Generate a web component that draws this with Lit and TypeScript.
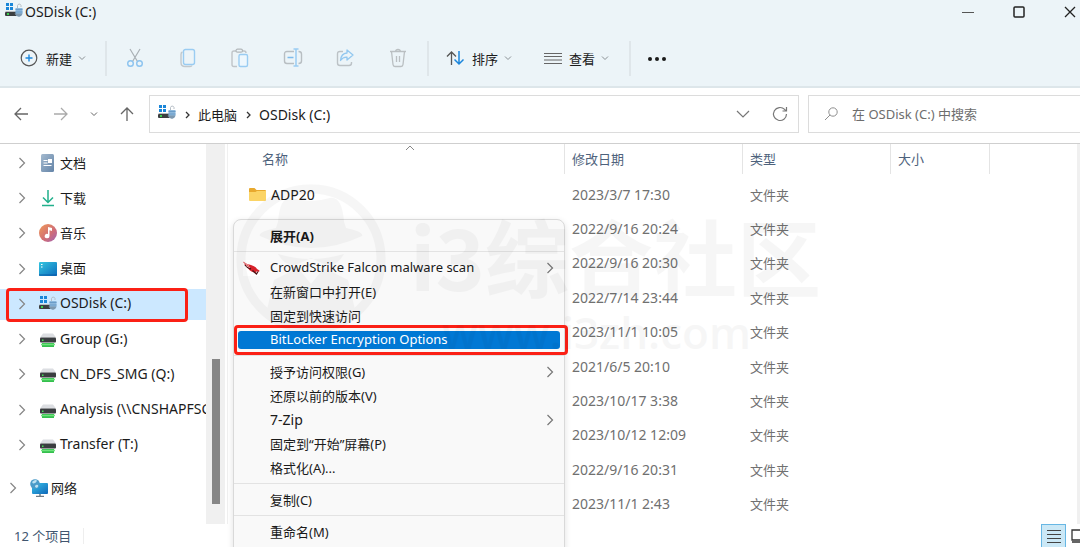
import { LitElement, html, css, svg, nothing } from "lit";
import { customElement, property } from "lit/decorators.js";
import { classMap } from "lit/directives/class-map.js";

const driveIcon = html`<svg class="ico" width="18" height="16" viewBox="0 0 18 16" aria-hidden="true">
  <path d="M1 0h3v3H1zM5 0h3v3H5zM1 4h3v3H1zM5 4h3v3H5z" fill="#1a86d8" />
  <path d="M1 8h10v1H0z" fill="#b9bdc0" />
  <rect x="0" y="9" width="12" height="4" rx="1" fill="#3c3f41" />
  <rect x="2" y="10" width="2" height="2" fill="#3ccf4e" />
  <path d="M12.500 5V2.500a1.800 1.800 0 0 1 3.500 0V4" fill="none" stroke="#b4bdc5" />
  <path d="M10.500 5h7v5q0 2.500-3.500 3.500q-3.500-1-3.500-3.500z" fill="#8db8dc" />
  <path d="M10.500 6.500h7M10.500 9h7" stroke="#6a9cc8" />
  <path d="M9.500 10.500h8q-1 3-3.500 3.300q-3-.3-4.500-3.300z" fill="#7e98ae" />
</svg>`;

const netDriveIcon = html`<svg class="ico" width="18" height="18" viewBox="0 -2 18 18" aria-hidden="true">
  <path d="M4 1.500h10l3 4H1z" fill="#dcdee2" />
  <rect x="1" y="5.500" width="16" height="5" rx="1" fill="#3a3d40" />
  <rect x="3" y="7.500" width="1.500" height="1.500" fill="#43dd55" />
  <path d="M3 11h12v4H3z" fill="#35c04d" />
  <path d="M2 12.500h14" stroke="#6fe37c" stroke-width="1.500" />
</svg>`;

const docIcon = html`<svg class="ico" width="18" height="18" viewBox="0 0 18 18" aria-hidden="true">
  <defs><linearGradient id="g" x2="1" y2="1"><stop stop-color="#a4bacf" /><stop offset="1" stop-color="#6484a8" /></linearGradient></defs>
  <rect x="2" y="0" width="13" height="18" rx="1.500" fill="url(#g)" />
  <path d="M4.500 6.500h4M4.500 9h4M4.500 11.500h8" stroke="#fff" />
  <rect x="9" y="5" width="4" height="4" fill="#fff" />
</svg>`;

const downloadIcon = html`<svg class="ico" width="18" height="18" viewBox="0 0 18 18" aria-hidden="true">
  <path d="M9 1v12M4 8.500l5 5 5-5M3 16.500h12" fill="none" stroke="#22b08c" stroke-width="1.500" />
</svg>`;

const musicIcon = html`<svg class="ico" width="18" height="18" viewBox="0 0 18 18" aria-hidden="true">
  <defs><linearGradient id="g" x2="1" y2="1"><stop stop-color="#f09a57" /><stop offset=".6" stop-color="#cf6c78" /><stop offset="1" stop-color="#9d64b8" /></linearGradient></defs>
  <circle cx="9" cy="9" r="9" fill="url(#g)" />
  <path d="M9 3l4 1v3l-2.500-.7V12a2.400 2.200 0 1 1-1.500-2z" fill="#fff" />
</svg>`;

const desktopIcon = html`<svg class="ico" width="18" height="16" viewBox="0 0 18 16" aria-hidden="true">
  <defs><linearGradient id="g" x2="1" y2="1"><stop stop-color="#35c6e0" /><stop offset="1" stop-color="#0b6cbd" /></linearGradient></defs>
  <rect x="0" y="1" width="18" height="14" rx="1" fill="url(#g)" />
  <path d="M2 3.500h1.500M2 6h1.500" stroke="#fff" />
  <path d="M0 14h18" stroke="#0a5aa5" />
</svg>`;

const networkIcon = html`<svg class="ico" width="18" height="18" viewBox="0 0 18 18" aria-hidden="true">
  <defs><linearGradient id="g" x2="1" y2="1"><stop stop-color="#39c2ea" /><stop offset="1" stop-color="#0f67b8" /></linearGradient></defs>
  <rect x="2" y="4" width="16" height="11" rx="1" fill="url(#g)" />
  <path d="M10 15v2M6 17.500h8" stroke="#6f7b85" stroke-width="1.500" />
  <circle cx="5" cy="5" r="4.800" fill="#4c9cc9" />
  <path d="M2 3q3-3 5-1.500q-1 3-4 3zM5 8q0-3 3-2q1 1-1 3z" fill="#bfe3f2" />
</svg>`;

const folderIcon = html`<svg class="ico" width="17" height="15" viewBox="0 0 17 15" aria-hidden="true">
  <path d="M0 2q0-1 1-1h4.500l2 2H16q1 0 1 1v8H0z" fill="#e8a92e" />
  <path d="M0 5h6.500l1.500-1H17v9q0 1-1 1H1q-1 0-1-1z" fill="#fbd466" />
</svg>`;

const falconIcon = html`<svg class="ico" width="17" height="16" viewBox="0 0 17 16" aria-hidden="true">
  <rect width="17" height="16" fill="#fff" />
  <path d="M0 1.500q3 2.500 8 3.500q5 1.500 6 4l2.500 1.500-.5 1.500-2-1-1.500 2-4-1.500q-3-2-4-4q-3-2-4.500-6z" fill="#d8232c" />
  <path d="M2 5q2 3 6 4M9.500 10.500l4 3.500 1.500-2.500" stroke="#4d1518" fill="none" stroke-width="1.300" />
  <path d="M1 3q3 2 5 2.500M3 5.500q2 1.500 4 2" stroke="#fbdcdc" stroke-width=".7" fill="none" />
</svg>`;

const line = (w: number, h: number, body: unknown) =>
  html`<svg width=${w} height=${h} viewBox="0 0 ${w} ${h}" fill="none" stroke="currentColor" aria-hidden="true">${body}</svg>`;

const chevronDown = line(8, 8, svg`<path d="M1 2.500l3 3 3-3" />`);
const chevronRight = line(8, 12, svg`<path d="M1.500 1l5 5-5 5" stroke-width="1.200" />`);

const tools = [
  { label: "剪切", icon: line(20, 20, svg`<path d="M5 1l7.500 12.500M15 1L7.500 13.500" stroke="#a9b0b5" stroke-width="1.200" /><circle cx="5.500" cy="15.500" r="2.800" stroke="#8cc3ef" stroke-width="1.400" /><circle cx="14.500" cy="15.500" r="2.800" stroke="#8cc3ef" stroke-width="1.400" />`) },
  { label: "复制", icon: line(20, 20, svg`<path d="M4.500 4q-1.500.5-1.500 2.500v8q0 4 4 4h5q1.500 0 2-1" stroke="#c2c8cc" stroke-width="1.400" /><rect x="5.500" y="1.500" width="11" height="15" rx="2" stroke="#9accf2" stroke-width="1.400" />`) },
  { label: "粘贴", icon: line(20, 20, svg`<path d="M7 18.500H4q-2 0-2-2V5q0-2 2-2h2M12 3h2q2 0 2 2" stroke="#bfc4c8" stroke-width="1.400" /><rect x="6" y="1.200" width="6.500" height="3" rx="1.500" stroke="#b2b7ba" stroke-width="1.200" /><rect x="9" y="6.500" width="8.500" height="12" rx="1.500" fill="#eef7fd" stroke="#9accf2" stroke-width="1.400" />`) },
  { label: "重命名", icon: line(20, 20, svg`<path d="M11 3.500H4q-2.500 0-2.500 2.500v7q0 2.500 2.500 2.500h7M15.500 3.500q3 0 3 2.500v7q0 2.500-3 2.500" stroke="#b8bec2" stroke-width="1.400" /><path d="M13 1v17M10.500 1h5M10.500 18h5" stroke="#9accf2" stroke-width="1.500" /><path d="M4.500 9.500h6" stroke="#7ebbeb" stroke-width="1.500" />`) },
  { label: "共享", icon: line(20, 20, svg`<path d="M8 3.500H5Q2.500 3.500 2.500 6v9q0 2.500 2.500 2.500h9q2.500 0 2.500-2.500v-1" stroke="#bcc2c6" stroke-width="1.400" /><path d="M12 2l6 5-6 5V9.200q-4-.3-6.500 3.300Q6 5.500 12 5z" stroke="#93c8f0" stroke-width="1.300" stroke-linejoin="round" />`) },
  { label: "删除", icon: line(20, 20, svg`<path d="M2 3.500h16M3.500 3.500l1.500 13q.2 2 2 2h6q1.800 0 2-2l1.500-13M7.500 3.500q.3-2 2.500-2t2.500 2M8.500 8v6M11.500 8v6" stroke="#babfc2" stroke-width="1.300" />`) },
];

interface Node { label: string; icon: unknown; cjk?: boolean; active?: boolean }
const tree: Node[] = [
  { label: "文档", icon: docIcon, cjk: true },
  { label: "下载", icon: downloadIcon, cjk: true },
  { label: "音乐", icon: musicIcon, cjk: true },
  { label: "桌面", icon: desktopIcon, cjk: true },
  { label: "OSDisk (C:)", icon: driveIcon, active: true },
  { label: "Group (G:)", icon: netDriveIcon },
  { label: "CN_DFS_SMG (Q:)", icon: netDriveIcon },
  { label: "Analysis (\\\\CNSHAPFSC", icon: netDriveIcon },
  { label: "Transfer (T:)", icon: netDriveIcon },
];

@customElement("tree-item")
class TreeItem extends LitElement {
  @property({ attribute: false }) node!: Node;
  static styles = css`
    :host { display: block; min-width: 0; }
    .row { box-sizing: border-box; display: flex; align-items: center; width: 100%; height: 31px; margin: 2px 0; padding: 0 0 1px 18px; border: 0; background: none; font: 14px "Noto Sans", "Noto Sans CJK SC", sans-serif; color: #1b1b1b; white-space: nowrap; overflow: hidden; text-align: left; }
    .active { background: #cce8ff; }
    .cjk { font-size: 13px; }
    .arrow { display: flex; width: 21px; color: #858585; flex: none; }
    .ico { flex: none; margin-right: 3px; }
    .label { padding-bottom: 2px; }
    :host([root]) .row { padding-left: 9px; }
  `;
  render() {
    const n = this.node;
    return html`<button class=${classMap({ row: true, cjk: !!n.cjk, active: !!n.active })}>
      <span class="arrow">${chevronRight}</span>${n.icon}<span class="label">${n.label}</span>
    </button>`;
  }
}

interface Entry { label?: string; bold?: boolean; sub?: boolean; icon?: unknown; selected?: boolean; large?: boolean }
const menu: Entry[] = [
  { label: "展开(A)", bold: true },
  {},
  { label: "CrowdStrike Falcon malware scan", icon: falconIcon, sub: true },
  { label: "在新窗口中打开(E)" },
  { label: "固定到快速访问" },
  { label: "BitLocker Encryption Options", selected: true },
  {},
  { label: "授予访问权限(G)", sub: true },
  { label: "还原以前的版本(V)" },
  { label: "7-Zip", sub: true, large: true },
  { label: "固定到“开始”屏幕(P)" },
  { label: "格式化(A)..." },
  {},
  { label: "复制(C)" },
  {},
  { label: "重命名(M)" },
];

@customElement("context-menu")
class ContextMenu extends LitElement {
  static styles = css`
    :host { display: flex; flex-direction: column; box-sizing: border-box; padding: 4px 4px 16px; border: 1px solid #d9d9d9; border-radius: 8px; background: #f9f9f9; box-shadow: 0 2px 6px rgba(0, 0, 0, 0.12); }
    .item { position: relative; box-sizing: border-box; display: flex; align-items: center; width: 100%; height: 24px; padding: 0 6px 0 5px; border: 0; background: none; font: 13px "Noto Sans", "Noto Sans CJK SC", sans-serif; color: #1a1a1a; text-align: left; white-space: nowrap; }
    .large { font-size: 14px; }
    .bold { font-weight: 700; }
    .slot { display: flex; flex: none; width: 27px; }
    .label { flex: 1; padding-bottom: 2px; }
    .arrow { display: flex; color: #777; }
    .selected { height: 18px; margin: 3px 0; border-radius: 3px; background: #0078d4; color: #fff; }
    .mark { position: absolute; inset: -6px -8px -6px -4px; border: 3px solid #fb2015; border-radius: 4px; }
    .sep { height: 1px; margin: 3px -4px 4px; border: 0; background: #e3e3e3; }
  `;
  render() {
    return menu.map((m) => m.label
      ? html`<button class=${classMap({ item: true, bold: !!m.bold, large: !!m.large, selected: !!m.selected })}>
          <span class="slot">${m.icon ?? nothing}</span><span class="label">${m.label}</span>
          ${m.sub ? html`<span class="arrow">${chevronRight}</span>` : nothing}
          ${m.selected ? html`<span class="mark"></span>` : nothing}
        </button>`
      : html`<hr class="sep" />`);
  }
}

const dates = ["2023/3/7 17:30", "2022/9/16 20:24", "2022/9/16 20:30", "2022/7/14 23:44", "2023/11/1 10:05", "2021/6/5 20:10", "2023/10/17 3:38", "2023/10/12 12:09", "2022/9/16 20:31", "2023/11/1 2:43"];

@customElement("app-root")
class AppRoot extends LitElement {
  static styles = css`
    :host { position: relative; display: flex; flex-direction: column; height: 100vh; overflow: hidden; background: #fff; color: #1b1b1b; font: 13px "Noto Sans", "Noto Sans CJK SC", sans-serif; }
    button { display: flex; align-items: center; justify-content: center; padding: 0; border: 0; background: none; font: inherit; color: inherit; }
    svg { display: block; flex: none; }
    .latin { font-size: 14px; }
    .title { display: flex; align-items: center; height: 24px; padding-left: 5px; background: #ecf4f8; }
    .title .name { flex: 1; margin-left: 2px; padding-bottom: 2px; }
    .title > .ico { margin-bottom: 2px; }
    .window { display: flex; gap: 31px; }
    .window button { width: 20px; height: 24px; }
    .tools { display: flex; align-items: center; height: 62px; background: #ecf4f8; border-bottom: 2px solid #dde6ea; }
    .group { box-sizing: border-box; display: flex; align-items: center; height: 35px; margin-top: 6px; border-right: 2px solid #dfe6ea; }
    .group .tail { color: #8a9094; margin-left: 6px; }
    .new { width: 107px; padding-left: 20px; }
    .new svg + span { margin-left: 8px; }
    .edit { display: grid; grid-template-columns: repeat(6, 1fr); width: 322px; padding: 0 3px 0 2px; }
    .show { width: 202px; padding-left: 17px; gap: 31px; }
    .show svg + span { margin-left: 7px; }
    .more { width: 52px; height: 35px; margin-top: 6px; }
    .nav { box-sizing: border-box; display: flex; align-items: center; height: 56px; padding-bottom: 3px; border-bottom: 1px solid #cfcfcf; }
    .arrows { display: grid; grid-template-columns: 42px 38px 28px 38px; width: 149px; color: #666; }
    .arrows .off { color: #aaa; }
    .address { flex: 1; box-sizing: border-box; display: flex; align-items: center; height: 38px; padding: 0 10px 0 8px; border: 1px solid #dcdcdc; }
    .crumbs { flex: 1; display: flex; align-items: center; }
    .crumbs > svg:not(.ico) { margin: 2px 7px 0 9px; color: #333; }
    .crumbs > .ico { margin-bottom: 2px; }
    .crumbs a { color: inherit; text-decoration: none; }
    .address > button { margin-left: 22px; color: #777; }
    .search { box-sizing: border-box; display: flex; align-items: center; width: 272px; height: 38px; margin-left: 9px; padding-left: 15px; border: 1px solid #dcdcdc; border-right: 0; color: #8f8f8f; }
    .search input { flex: 1; min-width: 0; margin-left: 14px; padding: 0; border: 0; outline: 0; background: none; font: inherit; }
    .search input::placeholder { color: #6d6d6d; opacity: 1; }
    .body { flex: 1; min-height: 0; display: grid; grid-template-columns: 206px 19px 1fr 3px; }
    .tree { display: flex; flex-direction: column; min-width: 0; padding-top: 2px; overflow: hidden; }
    .places { display: grid; grid-auto-rows: 1fr; height: 317px; }
    .network { margin-top: 8px; }
    .rail { background: #f0f0f0; }
    .thumb { width: 8px; height: 145px; margin: 215px auto 0 6px; background: #868686; }
    .files { margin-left: 2px; border-left: 1px solid #f0f0f0; overflow: hidden; }
    table { table-layout: fixed; width: 762px; height: 378px; border-collapse: collapse; }
    th, td { height: 34px; padding: 0 0 2px 7px; text-align: left; font-weight: 400; white-space: nowrap; box-sizing: border-box; }
    th { position: relative; padding-bottom: 6px; color: #4e627c; background: linear-gradient(#e4e4e4, #e4e4e4) right top / 1px 30px no-repeat; }
    th:first-child { padding-left: 34px; }
    .caret { position: absolute; left: 177px; top: 0; color: #888; }
    td { color: #707070; }
    td:first-child { padding-left: 21px; color: #1b1b1b; }
    .file { display: flex; align-items: center; gap: 5px; }
    .status { display: flex; align-items: center; height: 23px; padding-left: 14px; color: #41566f; }
    .count { padding-right: 12px; border-right: 1px solid #eee; line-height: 16px; margin-right: auto; }
    .status button { height: 23px; }
    .list { width: 25px; border: 1px solid #67b7e4; border-bottom: 0; background: #cbe8f6; color: #444; }
    .tiles { width: 14px; padding-left: 5px; color: #333; overflow: hidden; justify-content: flex-start; }
    context-menu { position: absolute; left: 233px; top: 219px; width: 332px; }
    .mark { position: absolute; left: 6px; top: 288px; width: 182px; height: 34px; box-sizing: border-box; border: 3px solid #fb2015; border-radius: 4px; pointer-events: none; }
    .watermark { position: absolute; left: 236px; top: 184px; display: flex; color: #000; opacity: 0.03; pointer-events: none; }
    .brand { margin-left: 24px; padding-top: 16px; white-space: nowrap; }
    .big { font: 700 84px/110px "Noto Sans CJK SC", sans-serif; }
    .site { margin: -8px 0 0 32px; font: 600 44px/60px "Open Sans", sans-serif; }
  `;

  render() {
    return html`
      <header class="title">
        ${driveIcon}<span class="name latin">OSDisk (C:)</span>
        <div class="window">
          <button aria-label="最小化">${line(12, 12, svg`<path d="M0 6.500h12" stroke="#555" />`)}</button>
          <button aria-label="最大化">${line(12, 12, svg`<rect x="1" y="1" width="10" height="10" rx="1" stroke="#222" stroke-width="1.500" />`)}</button>
          <button aria-label="关闭">${line(12, 12, svg`<path d="M1 1l10 10M11 1L1 11" stroke="#222" stroke-width="1.300" />`)}</button>
        </div>
      </header>
      <div class="tools">
        <div class="group new">
          <button>${line(18, 18, svg`<circle cx="9" cy="9" r="7.800" stroke="#555" stroke-width="1.200" /><path d="M9 5.500v7M5.500 9h7" stroke="#1b86dc" stroke-width="1.400" />`)}<span>新建</span><span class="tail">${chevronDown}</span></button>
        </div>
        <div class="group edit">${tools.map((t) => html`<button aria-label=${t.label}>${t.icon}</button>`)}</div>
        <div class="group show">
          <button>${line(19, 18, svg`<path d="M5.500 16V3M1 7.500L5.500 3l4.500 4.500" stroke="#555" stroke-width="1.300" /><path d="M13 2v13M8.500 10.500L13 15l4.500-4.500" stroke="#1b86dc" stroke-width="1.500" />`)}<span>排序</span><span class="tail">${chevronDown}</span></button>
          <button>${line(19, 18, svg`<path d="M1 4.500h18M1 7.500h18M1 11h18M1 14.500h18" stroke="#666" />`)}<span>查看</span><span class="tail">${chevronDown}</span></button>
        </div>
        <button class="more" aria-label="更多">${line(20, 6, svg`<g fill="#1a1a1a" stroke="none"><circle cx="3" cy="4" r="2" /><circle cx="10" cy="4" r="2" /><circle cx="17" cy="4" r="2" /></g>`)}</button>
      </div>
      <nav class="nav">
        <div class="arrows">
          <button aria-label="后退">${line(16, 16, svg`<path d="M15 8H2M8 2L2 8l6 6" stroke-width="1.300" />`)}</button>
          <button class="off" aria-label="前进">${line(16, 16, svg`<path d="M1 8h13M8 2l6 6-6 6" stroke-width="1.300" />`)}</button>
          <button aria-label="最近">${chevronDown}</button>
          <button aria-label="向上">${line(16, 16, svg`<path d="M8 15V2M2 8l6-6 6 6" stroke-width="1.300" />`)}</button>
        </div>
        <div class="address">
          <div class="crumbs">
            ${driveIcon}${line(6, 8, svg`<path d="M1 1l3 3-3 3" stroke-width="1.300" />`)}<a href="#pc">此电脑</a>${line(6, 8, svg`<path d="M1 1l3 3-3 3" stroke-width="1.300" />`)}<a class="latin" href="#c">OSDisk (C:)</a>
          </div>
          <button aria-label="展开地址">${line(14, 14, svg`<path d="M1 4l6 6 6-6" stroke-width="1.200" />`)}</button>
          <button aria-label="刷新">${line(16, 16, svg`<path d="M14.500 8A6.500 6.500 0 1 1 12.600 3.400L14 4.800M14.500 1v4h-4" stroke-width="1.200" />`)}</button>
        </div>
        <label class="search">
          ${line(14, 14, svg`<circle cx="9" cy="5" r="4.200" /><path d="M6 8L1 13" />`)}
          <input type="search" aria-label="搜索" placeholder="在 OSDisk (C:) 中搜索" />
        </label>
      </nav>
      <div class="body">
        <aside class="tree">
          <div class="places">${tree.map((n) => html`<tree-item .node=${n}></tree-item>`)}</div>
          <tree-item root class="network" .node=${{ label: "网络", icon: networkIcon, cjk: true }}></tree-item>
        </aside>
        <div class="rail"><div class="thumb"></div></div>
        <main class="files">
          <table>
            <colgroup><col width="337" /><col width="178" /><col width="148" /><col width="99" /></colgroup>
            <thead><tr>
              <th>名称<i class="caret">${line(10, 8, svg`<path d="M1 6l4-4 4 4" />`)}</i></th>
              <th>修改日期</th><th>类型</th><th>大小</th>
            </tr></thead>
            <tbody>${dates.map((d, i) => html`<tr>
              <td>${i === 0 ? html`<div class="file latin">${folderIcon}ADP20</div>` : nothing}</td>
              <td class="latin">${d}</td><td>文件夹</td><td></td>
            </tr>`)}</tbody>
          </table>
        </main>
        <div class="rail"></div>
      </div>
      <footer class="status">
        <span class="count">12 个项目</span>
        <button class="list" aria-label="详细信息">${line(14, 14, svg`<path d="M0 1.500h14M0 5.500h14M0 9.500h14M0 13.500h14" />`)}</button>
        <button class="tiles" aria-label="大图标">${line(16, 14, svg`<path d="M1 1h14v10H1zM1 13h14" stroke-width="1.300" />`)}</button>
      </footer>
      <context-menu></context-menu>
      <div class="mark"></div>
      <div class="watermark" aria-hidden="true">
        <svg width="150" height="150" viewBox="0 0 150 150">
          <circle cx="75" cy="75" r="70" fill="none" stroke="#000" stroke-width="9" />
          <path d="M42 38Q44 12 56 14Q75 20 94 14Q106 12 108 38L110 44Q128 48 126 52Q75 76 24 52Q22 48 40 44z" />
          <path d="M42 70Q75 80 108 70Q100 84 88 80L75 74L62 80Q50 84 42 70zM30 130L38 96L62 84L75 100L88 84L112 96L120 130Q75 160 30 130z" />
        </svg>
        <div class="brand"><div class="big">i3综合社区</div><div class="site">www.i3zh.com</div></div>
      </div>
    `;
  }
}
